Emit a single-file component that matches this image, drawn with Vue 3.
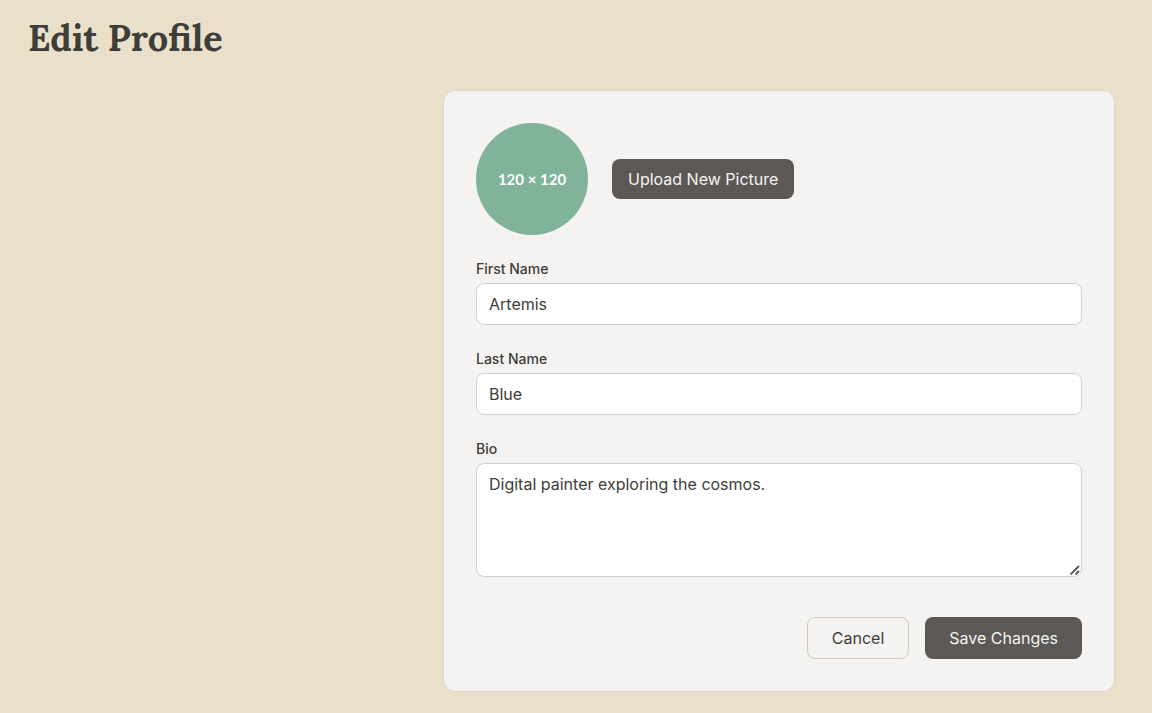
<script setup>
import { ref } from 'vue'

const firstName = ref('Artemis')
const lastName = ref('Blue')
const bio = ref('Digital painter exploring the cosmos.')
</script>

<template>
  <main class="page">
    <h1 class="title">Edit Profile</h1>
    <form class="card" @submit.prevent>
      <div class="picture-row">
        <div class="avatar">120 × 120</div>
        <button type="button" class="btn btn-upload">Upload New Picture</button>
      </div>
      <div class="field">
        <label for="first-name">First Name</label>
        <input id="first-name" v-model="firstName" type="text" />
      </div>
      <div class="field">
        <label for="last-name">Last Name</label>
        <input id="last-name" v-model="lastName" type="text" />
      </div>
      <div class="field">
        <label for="bio">Bio</label>
        <div class="bio-box">
          <textarea id="bio" v-model="bio" rows="4" spellcheck="false"></textarea>
          <svg class="grip" width="10" height="10" viewBox="0 0 10 10" aria-hidden="true">
            <path d="M0.5 9.5 L9 1 M5.5 9.5 L9 6" fill="none" stroke="#555" stroke-width="1.8" />
          </svg>
        </div>
      </div>
      <div class="actions">
        <button type="button" class="btn btn-cancel">Cancel</button>
        <button type="submit" class="btn btn-save">Save Changes</button>
      </div>
    </form>
  </main>
</template>

<style>
body {
  margin: 0;
  background: #eadfc8;
}
</style>

<style scoped>
* {
  box-sizing: border-box;
}
.page {
  padding: 16px 37px 21px 28px;
  font-family: Inter, "Liberation Sans", sans-serif;
  font-size: 16px;
  line-height: 24px;
  color: #3d3d3a;
}
.title {
  margin: 0 0 30px;
  font-family: Lora, "Liberation Serif", serif;
  font-size: 36px;
  line-height: 44px;
  font-weight: 700;
}
.card {
  max-width: 672px;
  margin-left: auto;
  padding: 32px;
  border: 1px solid #ddd6c4;
  border-radius: 12px;
  background: #f4f3f1;
}
.picture-row {
  display: flex;
  align-items: center;
  gap: 24px;
  margin-bottom: 24px;
}
.avatar {
  display: flex;
  align-items: center;
  justify-content: center;
  width: 112px;
  height: 112px;
  border-radius: 50%;
  background: #81b29a;
  color: #fff;
  font-family: Lato, sans-serif;
  font-size: 15px;
  font-weight: 700;
}
.field {
  margin-bottom: 24px;
}
label {
  display: block;
  margin-bottom: 4px;
  font-size: 14px;
  line-height: 20px;
  font-weight: 500;
}
input,
textarea {
  display: block;
  width: 100%;
  padding: 8px 12px;
  border: 1px solid #d1d1d6;
  border-radius: 8px;
  background: #fff;
  color: inherit;
  font: inherit;
}
textarea {
  resize: vertical;
}
textarea::-webkit-resizer {
  background: transparent;
}
.bio-box {
  position: relative;
}
.grip {
  position: absolute;
  right: 2px;
  bottom: 2px;
  pointer-events: none;
}
.actions {
  display: flex;
  justify-content: flex-end;
  gap: 16px;
  padding-top: 16px;
}
.btn {
  padding: 8px 24px;
  border: none;
  border-radius: 8px;
  background: #5c5855;
  color: #f4f3f1;
  font: inherit;
  cursor: pointer;
}
.btn-upload {
  padding: 8px 16px;
}
.btn-cancel {
  border: 1px solid #cfcabd;
  background: transparent;
  color: #3d3d3a;
}
</style>
